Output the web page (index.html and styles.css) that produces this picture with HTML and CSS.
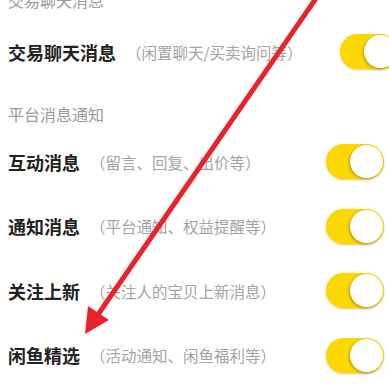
FILE: index.html
```html
<!DOCTYPE html>
<html lang="zh-CN">
<head>
  <meta charset="UTF-8" />
  <meta name="viewport" content="width=device-width, initial-scale=1.0"/>
  <title>消息设置</title>
  <link rel="stylesheet" href="styles.css">
</head>
<body>
  <div class="page">
    <div class="group-title first">交易聊天消息</div>
    <div class="group first">
      <div class="row trade">
        <span class="name">交易聊天消息</span>
        <span class="desc">（闲置聊天/买卖询问等）</span>
        <span class="switch on"><i></i></span>
      </div>
    </div>

    <div class="group-title">平台消息通知</div>
    <div class="group">
      <div class="row">
        <span class="name">互动消息</span>
        <span class="desc">（留言、回复、出价等）</span>
        <span class="switch on"><i></i></span>
      </div>
      <div class="row">
        <span class="name">通知消息</span>
        <span class="desc">（平台通知、权益提醒等）</span>
        <span class="switch on"><i></i></span>
      </div>
      <div class="row">
        <span class="name">关注上新</span>
        <span class="desc">（关注人的宝贝上新消息）</span>
        <span class="switch on"><i></i></span>
      </div>
      <div class="row">
        <span class="name">闲鱼精选</span>
        <span class="desc">（活动通知、闲鱼福利等）</span>
        <span class="switch on"><i></i></span>
      </div>
    </div>

    <!-- annotation arrow drawn over the screenshot -->
    <svg class="arrow" width="389" height="384" viewBox="0 0 389 384">
      <line x1="319" y1="-6" x2="97" y2="316" stroke="#e8232b" stroke-width="5" stroke-linecap="round"/>
      <polygon points="85,334 88,306 109,320" fill="#e8232b"/>
    </svg>
  </div>
</body>
</html>
```

FILE: styles.css
```css
body {
  margin: 0;
  background: #fff;
  font-family: "Noto Sans CJK SC", "Noto Sans", sans-serif;
  overflow: hidden;
}
.page {
  position: relative;
  width: 389px;
  height: 384px;
  overflow: hidden;
}
.group-title {
  height: 29px;
  line-height: 29px;
  padding-left: 8px;
  font-size: 16px;
  color: #9a9a9a;
}
.group-title.first {
  margin-top: -14px;
}
.group {
  margin: 0;
}
.group.first {
  margin: 4px 0 16px;
}
.row {
  display: flex;
  align-items: center;
  height: 65px;
  padding-left: 8px;
}
.group .row + .row {
  margin-top: -0.5px;
}
.name {
  font-size: 18px;
  font-weight: bold;
  color: #222;
}
.desc {
  margin-left: 10px;
  font-size: 15.5px;
  color: #a3a3a3;
}
.switch {
  margin-left: auto;
  margin-right: 5px;
  position: relative;
  width: 58px;
  height: 35px;
  border-radius: 18px;
  background: #e5e5e5;
  flex-shrink: 0;
}
.switch.on {
  background: #fdd800;
  box-shadow: 0 1px 2px rgba(190, 150, 0, 0.5);
}
.switch i {
  position: absolute;
  top: 1px;
  right: 1px;
  width: 33px;
  height: 33px;
  border-radius: 50%;
  background: #fff;
  box-shadow: -1px 1px 3px rgba(0, 0, 0, 0.3);
}
.row.trade .switch {
  margin-right: -9px;
}
.arrow {
  position: absolute;
  left: 0;
  top: 0;
  pointer-events: none;
}
```
